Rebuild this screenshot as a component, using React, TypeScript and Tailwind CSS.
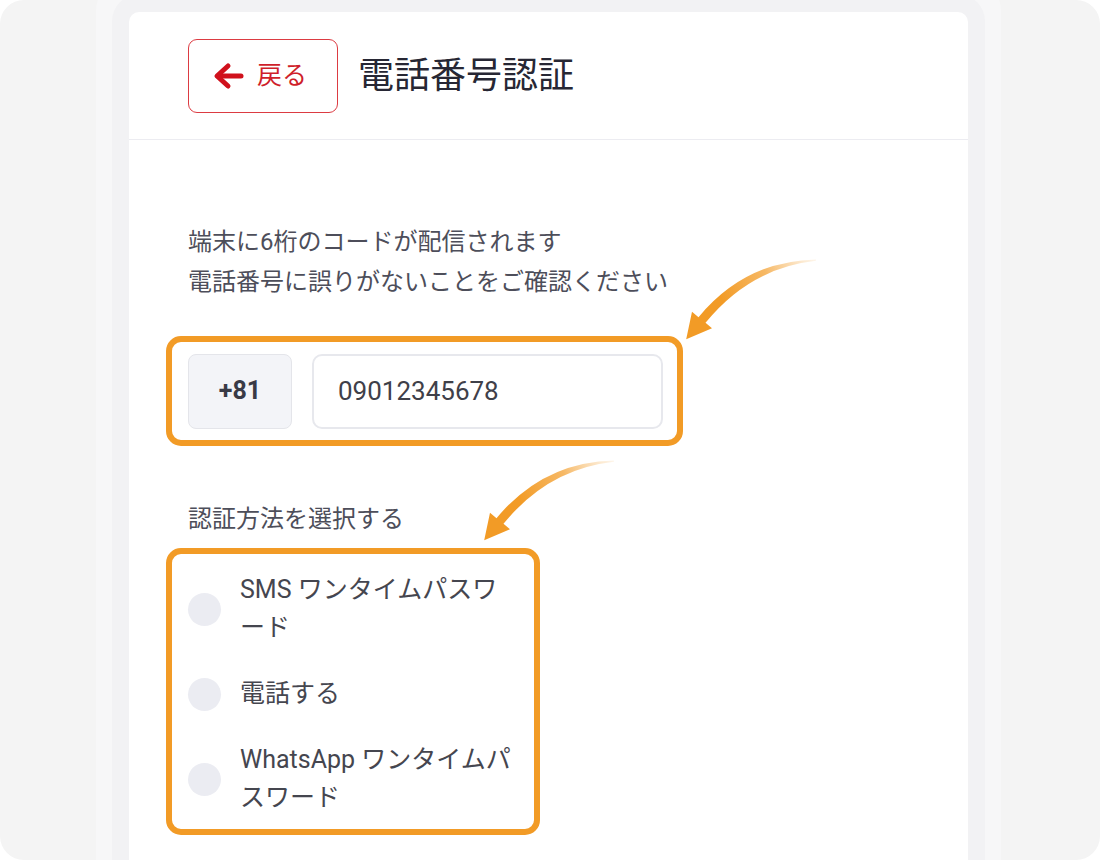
import { useState } from 'react'

const FONT = 'font-["Roboto","Noto_Sans_CJK_JP",sans-serif]'

const METHODS = [
  { id: 'sms', label: 'SMS ワンタイムパスワード' },
  { id: 'call', label: '電話する' },
  { id: 'whatsapp', label: 'WhatsApp ワンタイムパスワード' },
]

// curved orange pointer used twice on the page
function CurvedArrow({ id }: { id: string }) {
  return (
    <svg width="138" height="90" viewBox="0 0 138 90">
      <defs>
        <linearGradient id={id} gradientUnits="userSpaceOnUse" x1="134" y1="5" x2="40" y2="45">
          <stop offset="0" stopColor="#f7c27a" stopOpacity="0.15" />
          <stop offset="0.5" stopColor="#f5ac4a" stopOpacity="0.85" />
          <stop offset="1" stopColor="#f29b26" />
        </linearGradient>
      </defs>
      <path
        d="M134 4.4 Q63 6 16.5 62.2 L10 56.8 L4.2 84.3 L30 73.2 L23.5 67.8 Q68 13 134 5.8 Z"
        fill={`url(#${id})`}
      />
    </svg>
  )
}

export default function App() {
  const [method, setMethod] = useState<string | null>(null)

  return (
    <div className={`relative h-[860px] w-full overflow-hidden rounded-[24px] bg-[#f4f4f4] ${FONT}`}>
      <div className="ml-[129px] mt-[12px] h-[900px] w-[839px] rounded-t-[10px] bg-white shadow-[0_0_0_17px_#f2f2f4,0_0_0_33px_#f7f7f8]">
        {/* header */}
        <div className="flex h-[128px] items-center gap-[20px] border-b border-[#ececf1] pl-[59px]">
          <button className="flex h-[74px] w-[150px] items-center gap-[13px] rounded-[9px] border-[1.5px] border-[#dc3b42] pl-[23px] text-[25px] text-[#cf1f2b]">
            <svg width="32" height="30" viewBox="0 0 32 30" fill="none" stroke="#d0111c" strokeWidth="5" strokeLinecap="round" strokeLinejoin="round">
              <path d="M29 15 H6" />
              <path d="M16 5 L5 15 L16 25" />
            </svg>
            <span className="leading-none">戻る</span>
          </button>
          <h1 className="text-[36px] font-normal text-[#272734]">電話番号認証</h1>
        </div>

        {/* body */}
        <div className="pl-[59px] pt-[82px]">
          <p className="text-[24px] leading-[40px] text-[#4d4e5a]">
            端末に6桁のコードが配信されます
            <br />
            電話番号に誤りがないことをご確認ください
          </p>

          <div className="-ml-[22px] mt-[34px] flex h-[110px] w-[517px] items-center gap-[20px] rounded-[15px] border-[6px] border-[#f29b26] pl-[16px] pr-[14px]">
            <div className="flex h-[75px] w-[104px] items-center justify-center rounded-[8px] border border-[#e4e5ea] bg-[#f3f4f8] text-[25px] font-bold text-[#393a46]">
              +81
            </div>
            <div className="flex h-[75px] flex-1 items-center rounded-[10px] border-2 border-[#e7e8ed] pl-[24px] text-[26px] text-[#3f4049]">
              09012345678
            </div>
          </div>

          <p className="mt-[53px] text-[24px] leading-[40px] text-[#4d4e5a]">認証方法を選択する</p>

          <div className="-ml-[22px] mt-[9px] flex w-[374px] flex-col gap-[28px] rounded-[15px] border-[6px] border-[#f29b26] pb-[12px] pl-[16px] pr-[16px] pt-[17px]">
            {METHODS.map((m) => (
              <label key={m.id} className="flex cursor-pointer items-center gap-[19px]" onClick={() => setMethod(m.id)}>
                <span
                  className={`h-[33px] w-[33px] shrink-0 rounded-full ${method === m.id ? 'bg-[#f29b26]' : 'bg-[#ebecf2]'}`}
                />
                <span className="w-[278px] text-[25px] leading-[38px] text-[#45464f]">{m.label}</span>
              </label>
            ))}
          </div>
        </div>
      </div>

      <div className="absolute left-[682px] top-[255px]">
        <CurvedArrow id="arrowA" />
      </div>
      <div className="absolute left-[480px] top-[456px]">
        <CurvedArrow id="arrowB" />
      </div>
    </div>
  )
}
